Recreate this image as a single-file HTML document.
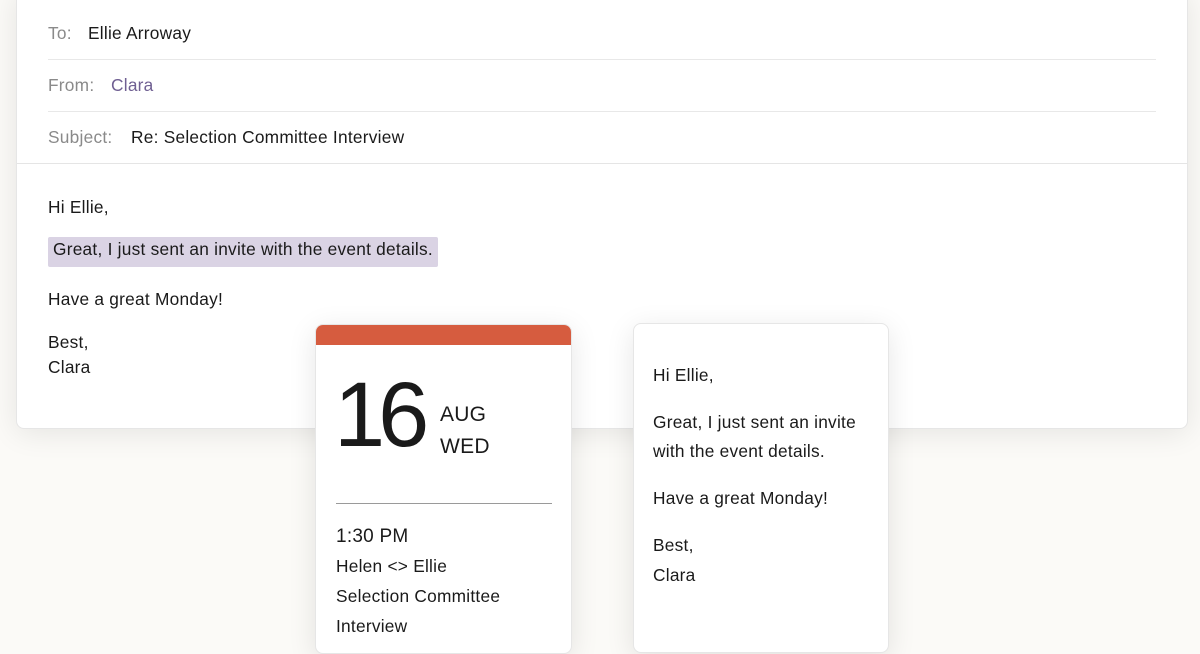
<!DOCTYPE html>
<html><head><meta charset="utf-8"><style>
*{margin:0;padding:0;box-sizing:border-box}
body{width:1200px;height:639px;overflow:hidden;background:#fbfaf7;font-family:"Liberation Sans",sans-serif;color:#1a1a1a;position:relative}
.mail{position:absolute;left:16px;top:-10px;width:1172px;height:439px;background:#fff;border:1px solid #e6e6e6;border-radius:0 0 8px 8px;box-shadow:0 4px 30px rgba(0,0,0,.09)}
.lab{color:#8a8a8a;display:inline-block}
.t{position:absolute;font-size:17.3px;letter-spacing:.25px;white-space:nowrap}
.card{position:absolute;background:#fff;border-radius:8px;box-shadow:0 6px 28px rgba(0,0,0,.10);border:1px solid #e6e6e6}
</style></head><body>
<div class="mail">
 <div class="t" style="left:31px;top:32px"><span class="lab">To:</span><span style="position:absolute;left:40px">Ellie Arroway</span></div>
 <div style="position:absolute;left:31px;right:31px;top:68px;border-top:1px solid #e8e8e8"></div>
 <div class="t" style="left:31px;top:84px"><span class="lab">From:</span><span style="position:absolute;left:63px;color:#6f5f92">Clara</span></div>
 <div style="position:absolute;left:31px;right:31px;top:120px;border-top:1px solid #e8e8e8"></div>
 <div class="t" style="left:31px;top:136px"><span class="lab">Subject:</span><span style="position:absolute;left:83px">Re: Selection Committee Interview</span></div>
 <div style="position:absolute;left:0;right:0;top:172px;border-top:1px solid #e5e5e5"></div>
 <div class="t" style="left:31px;top:206px">Hi Ellie,</div>
 <div class="t" style="left:31px;top:246px;background:#dad3e4;padding:2px 5px;border-radius:2px;height:30px">Great, I just sent an invite with the event details.</div>
 <div class="t" style="left:31px;top:298px">Have a great Monday!</div>
 <div class="t" style="left:31px;top:341px">Best,</div>
 <div class="t" style="left:31px;top:366px">Clara</div>
</div>
<div class="card" style="left:315px;top:324px;width:257px;height:330px;overflow:hidden">
 <div style="height:20px;background:#d65c3f"></div>
 <div class="t" style="left:18px;top:44px;font-size:92px;line-height:1;letter-spacing:-7px;font-weight:300">16</div>
 <div class="t" style="left:124px;top:78px;font-size:21px">AUG</div>
 <div class="t" style="left:124px;top:110px;font-size:21px">WED</div>
 <div style="position:absolute;left:20px;width:216px;top:178px;border-top:1px solid #9a9a9a"></div>
 <div class="t" style="left:20px;top:201px;font-size:19px">1:30 PM</div>
 <div class="t" style="left:20px;top:231px">Helen &lt;&gt; Ellie</div>
 <div class="t" style="left:20px;top:261px">Selection Committee</div>
 <div class="t" style="left:20px;top:291px">Interview</div>
</div>
<div class="card" style="left:633px;top:323px;width:256px;height:330px">
 <div class="t" style="left:19px;top:41px">Hi Ellie,</div>
 <div class="t" style="left:19px;top:88px">Great, I just sent an invite</div>
 <div class="t" style="left:19px;top:117px">with the event details.</div>
 <div class="t" style="left:19px;top:164px">Have a great Monday!</div>
 <div class="t" style="left:19px;top:211px">Best,</div>
 <div class="t" style="left:19px;top:241px">Clara</div>
</div>
</body></html>
